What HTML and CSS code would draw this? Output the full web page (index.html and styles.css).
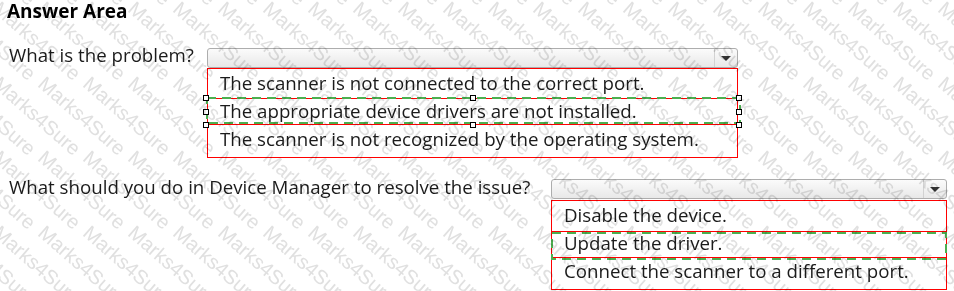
FILE: index.html
```html
<!DOCTYPE html>
<html lang="en">
<head>
<meta charset="utf-8">
<title>Answer Area</title>
<link rel="stylesheet" href="styles.css">
</head>
<body>
<div class="page">
  <h1 class="title">Answer Area</h1>

  <div class="question q1">
    <div class="label">What is the problem?</div>
    <div class="answer">
      <div class="select">
        <div class="select-field"></div>
        <div class="select-arrow"><span class="tri"></span></div>
      </div>
      <div class="options">
        <div class="opt">The scanner is not connected to the correct port.</div>
        <div class="opt">The appropriate device drivers are not installed.</div>
        <div class="opt">The scanner is not recognized by the operating system.</div>
        <div class="mark-red"></div>
        <svg class="mark-green"><rect></rect></svg>
        <div class="selection">
          <span class="handle h-tl"></span><span class="handle h-tc"></span><span class="handle h-tr"></span>
          <span class="handle h-ml"></span><span class="handle h-mr"></span>
          <span class="handle h-bl"></span><span class="handle h-bc"></span><span class="handle h-br"></span>
        </div>
      </div>
    </div>
  </div>

  <div class="question q2">
    <div class="label">What should you do in Device Manager to resolve the issue?</div>
    <div class="answer">
      <div class="select">
        <div class="select-field"></div>
        <div class="select-arrow"><span class="tri"></span></div>
      </div>
      <div class="options">
        <div class="opt">Disable the device.</div>
        <div class="opt">Update the driver.</div>
        <div class="opt">Connect the scanner to a different port.</div>
        <div class="mark-red"></div>
        <svg class="mark-green"><rect></rect></svg>
      </div>
    </div>
  </div>
</div>
<div class="watermark" aria-hidden="true"></div>
<script src="script.js"></script>
</body>
</html>
```

FILE: styles.css
```css
html, body {
  margin: 0;
  padding: 0;
  background: #ffffff;
}

body {
  width: 954px;
  height: 291px;
  overflow: hidden;
  position: relative;
  font-family: "Open Sans", "Noto Sans", sans-serif;
  color: #1b1b1b;
}

.page {
  padding: 0 0 0 7px;
}

.title {
  margin: 0;
  font-size: 19px;
  font-weight: 700;
  line-height: 22px;
  color: #000;
}

.question {
  display: flex;
  align-items: flex-start;
}

.q1 {
  margin-top: 23px;
}

.q2 {
  margin-top: 19px;
}

.label {
  font-size: 18.7px;
  line-height: 20px;
  padding-left: 2px;
  white-space: nowrap;
}

.q1 .label {
  width: 198px;
}

.q2 .label {
  width: 542px;
}

.q1 .answer {
  margin-top: 3px;
  width: 531px;
}

.q2 .answer {
  margin-top: 2px;
  width: 396px;
}

.select {
  display: flex;
  height: 20px;
  box-sizing: border-box;
  border: 1px solid #adadad;
  border-radius: 3px;
  background: linear-gradient(#fbfbfb, #e8e8e8);
}

.select-field {
  flex: 1;
}

.select-arrow {
  width: 22px;
  border-left: 1px solid #d2d2d2;
  display: flex;
  align-items: center;
  justify-content: center;
}

.tri {
  width: 0;
  height: 0;
  border-left: 5px solid transparent;
  border-right: 5px solid transparent;
  border-top: 5px solid #333;
}

.options {
  position: relative;
  border: 1px solid #ff0000;
  background: #fff;
  padding-bottom: 4px;
}

.q2 .options {
  margin-top: 1px;
}

.opt {
  font-size: 18.7px;
  line-height: 28px;
  padding-left: 12px;
  white-space: nowrap;
}

.mark-red {
  position: absolute;
  left: -1px;
  right: -1px;
  border: 1px solid #ff0000;
}

.q1 .mark-red {
  top: 29px;
  height: 25px;
}

.q2 .mark-red {
  top: 30px;
  height: 25px;
}

.mark-green {
  position: absolute;
  overflow: visible;
}

.mark-green rect {
  x: 1px;
  y: 1px;
  width: calc(100% - 2px);
  height: calc(100% - 2px);
  fill: none;
  stroke: #4caf50;
  stroke-width: 2;
  stroke-dasharray: 9 6;
}

.q1 .mark-green {
  left: -2px;
  top: 28px;
  width: 535px;
  height: 27px;
}

.q2 .mark-green {
  left: -1px;
  top: 31px;
  width: 396px;
  height: 28px;
}

.selection {
  position: absolute;
  left: -2px;
  top: 29px;
  width: 533px;
  height: 27px;
}

.handle {
  position: absolute;
  width: 6px;
  height: 6px;
  box-sizing: border-box;
  border: 1px solid #000;
  background: #fff;
}

.h-tl, .h-ml, .h-bl { left: -3px; }
.h-tc, .h-bc { left: calc(50% - 3px); }
.h-tr, .h-mr, .h-br { right: -3px; }
.h-tl, .h-tc, .h-tr { top: -3px; }
.h-ml, .h-mr { top: calc(50% - 3px); }
.h-bl, .h-bc, .h-br { bottom: -3px; }

.watermark {
  position: absolute;
  inset: 0;
  overflow: hidden;
  pointer-events: none;
  mix-blend-mode: multiply;
  z-index: 10;
}

.wm {
  position: absolute;
  font-family: "Liberation Sans", Arial, sans-serif;
  font-size: 20px;
  line-height: 1;
  color: #e0e0e0;
  white-space: nowrap;
  transform: rotate(41deg);
  transform-origin: 0 0;
}
```

FILE: script.js
```js
(function () {
  var wm = document.querySelector('.watermark');
  for (var r = -1; r < 5; r++) {
    for (var c = -3; c < 23; c++) {
      var s = document.createElement('span');
      s.className = 'wm';
      s.textContent = 'Marks4Sure';
      s.style.left = (3 + 45 * c) + 'px';
      s.style.top = (-2 + 74.7 * r) + 'px';
      wm.appendChild(s);
    }
  }
})();
```
